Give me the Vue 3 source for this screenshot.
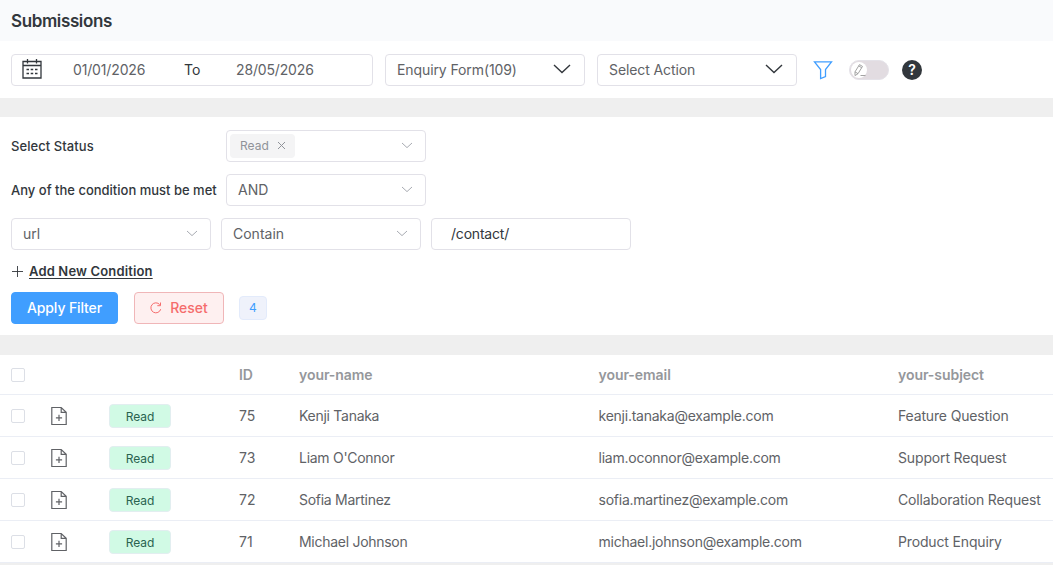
<template>
  <div class="page">
    <header class="page-header">
      <h1>Submissions</h1>
    </header>

    <!-- Toolbar: date range, form picker, bulk action -->
    <div class="toolbar">
      <div class="date-range">
        <svg class="calendar-icon" width="22" height="22" viewBox="0 0 22 22">
          <path d="M2 3.500h18v16.500H2zM2 7.500h18M6.500 1v4.500M15.500 1v4.500" />
          <path class="dots" d="M5.500 11.500h2.500M9.700 11.500h2.500M14 11.500h2.500M5.500 15.500h2.500M9.700 15.500h2.500M14 15.500h2.500" />
        </svg>
        <span class="date from">{{ dateRange.from }}</span>
        <span class="to">To</span>
        <span class="date">{{ dateRange.to }}</span>
      </div>

      <div class="select dark">
        <span>Enquiry Form(109)</span>
        <svg width="18" height="10" viewBox="0 0 18 10"><path d="M1 1l8 7.500L17 1" /></svg>
      </div>
      <div class="select dark">
        <span>Select Action</span>
        <svg width="18" height="10" viewBox="0 0 18 10"><path d="M1 1l8 7.500L17 1" /></svg>
      </div>

      <svg class="filter-icon" width="20" height="20" viewBox="0 0 20 20">
        <path d="M1.500 1.800h17L12.500 9.500v7L7.600 18.500v-9z" />
      </svg>

      <button type="button" class="switch">
        <span class="knob">
          <svg width="14" height="14" viewBox="0 0 14 14">
            <path d="M3 8.800L7.500 1.600l3 1.800L6 10.700l-3 1.900zM6.700 2.900l3 1.800M3 8.800l3 1.900M8.500 12.500h5" />
          </svg>
        </span>
      </button>

      <span class="help">?</span>
    </div>

    <!-- Filter conditions -->
    <section class="filters">
      <div class="filter-row">
        <label class="status-label">Select Status</label>
        <div class="select tags">
          <span class="tag">
            Read
            <svg width="9" height="9" viewBox="0 0 9 9"><path d="M1 1l7 7M8 1L1 8" /></svg>
          </span>
          <svg width="12" height="7" viewBox="0 0 12 7"><path d="M1 1l5 4.600L11 1" /></svg>
        </div>
      </div>

      <div class="filter-row">
        <label>Any of the condition must be met</label>
        <div class="select">
          <span>AND</span>
          <svg width="12" height="7" viewBox="0 0 12 7"><path d="M1 1l5 4.600L11 1" /></svg>
        </div>
      </div>

      <div class="condition">
        <div class="select">
          <span>url</span>
          <svg width="12" height="7" viewBox="0 0 12 7"><path d="M1 1l5 4.600L11 1" /></svg>
        </div>
        <div class="select">
          <span>Contain</span>
          <svg width="12" height="7" viewBox="0 0 12 7"><path d="M1 1l5 4.600L11 1" /></svg>
        </div>
        <input v-model="conditionValue" type="text" class="value-input" />
      </div>

      <a class="add-condition">
        <svg width="13" height="13" viewBox="0 0 13 13"><path d="M6.500 1v11M1 6.500h11" /></svg>
        <span>Add New Condition</span>
      </a>

      <div class="filter-actions">
        <button type="button" class="btn primary">Apply Filter</button>
        <button type="button" class="btn danger">
          <svg width="12" height="12" viewBox="0 0 12 12">
            <path d="M10.700 7.200A5 5 0 1 1 9.700 2.600M10.500 .500v3.200H7.300" />
          </svg>
          <span>Reset</span>
        </button>
        <span class="count">4</span>
      </div>
    </section>

    <!-- Submissions table -->
    <div class="table">
      <div class="row head">
        <span><i class="checkbox"></i></span>
        <span></span>
        <span></span>
        <span>ID</span>
        <span>your-name</span>
        <span>your-email</span>
        <span>your-subject</span>
      </div>
      <div v-for="item in submissions" :key="item.id" class="row">
        <span><i class="checkbox"></i></span>
        <span>
          <svg class="doc-icon" width="18" height="20" viewBox="0 0 18 20">
            <path d="M1.800 1.500h9.400L16.200 6.300v12.200H1.800zM11.200 1.500v4.800h5M9 8.700v6.200M5.900 11.800h6.200" />
          </svg>
        </span>
        <span><b class="status">{{ item.status }}</b></span>
        <span>{{ item.id }}</span>
        <span class="name">{{ item.name }}</span>
        <span class="email">{{ item.email }}</span>
        <span class="subject">{{ item.subject }}</span>
      </div>
    </div>
  </div>
</template>

<script setup>
import { ref } from 'vue'

const dateRange = ref({ from: '01/01/2026', to: '28/05/2026' })
const conditionValue = ref('/contact/')

const submissions = ref([
  { id: 75, status: 'Read', name: 'Kenji Tanaka', email: 'kenji.tanaka@example.com', subject: 'Feature Question' },
  { id: 73, status: 'Read', name: "Liam O'Connor", email: 'liam.oconnor@example.com', subject: 'Support Request' },
  { id: 72, status: 'Read', name: 'Sofia Martinez', email: 'sofia.martinez@example.com', subject: 'Collaboration Request' },
  { id: 71, status: 'Read', name: 'Michael Johnson', email: 'michael.johnson@example.com', subject: 'Product Enquiry' }
])
</script>

<style>
body {
  background: #efefef;
}
</style>

<style scoped>
.page {
  width: 100%;
  height: 565px;
  overflow: hidden;
  background: #efefef;
  color: #606266;
  font-family: Inter, "Liberation Sans", sans-serif;
  font-size: 14px;
}

.page * {
  box-sizing: border-box;
}

svg {
  display: block;
  flex: none;
  fill: none;
  stroke: currentColor;
}

.page-header {
  display: flex;
  align-items: center;
  height: 41px;
  padding: 0 11px;
  background: #f9fafc;
}

h1 {
  margin: 0;
  color: #32373c;
  font-size: 17px;
  font-weight: 600;
  letter-spacing: -0.38px;
}

.toolbar {
  display: flex;
  align-items: center;
  height: 57px;
  padding: 0 11px;
  background: #fff;
}

.date-range {
  display: flex;
  align-items: center;
  width: 362px;
  height: 32px;
  margin-right: 12px;
  padding: 0 0 1px 9px;
  border: 1px solid #e2e1e8;
  border-radius: 4px;
}

.calendar-icon {
  color: #32373c;
  stroke-width: 1.3;
}

.calendar-icon .dots {
  stroke-width: 1.4;
}

.date {
  width: 90px;
  letter-spacing: -0.15px;
}

.date.from {
  width: 111px;
  margin-left: 30px;
}

.to {
  width: 52px;
  color: #32373c;
}

.select {
  display: flex;
  align-items: center;
  justify-content: space-between;
  width: 200px;
  height: 32px;
  padding: 0 12px 1px 11px;
  border: 1px solid #e2e1e8;
  border-radius: 4px;
  background: #fff;
}

.select svg {
  color: #a8abb2;
}

.select.dark {
  margin-right: 12px;
  padding-right: 13px;
  letter-spacing: -0.1px;
}

.select.dark svg {
  color: #32373c;
  stroke-width: 1.4;
}

.filter-icon {
  margin-left: 4px;
  color: #409eff;
  stroke-width: 1.3;
}

.switch {
  display: flex;
  align-items: center;
  width: 40px;
  height: 20px;
  margin-left: 16px;
  padding: 0 1px;
  border: 1px solid #e4e2e8;
  border-radius: 10px;
  background: #e2dce1;
}

.knob {
  display: flex;
  align-items: center;
  justify-content: center;
  width: 16px;
  height: 16px;
  border-radius: 50%;
  background: #fff;
  color: #999;
}

.knob svg {
  stroke-width: 0.9;
}

.help {
  width: 20px;
  height: 20px;
  margin-left: 13px;
  border-radius: 50%;
  background: #32373c;
  color: #fff;
  font-size: 14px;
  font-weight: 600;
  line-height: 20px;
  text-align: center;
}

.filters {
  display: flex;
  flex-direction: column;
  height: 218px;
  margin-top: 19px;
  padding: 13px 11px 0;
  background: #fff;
}

.filter-row {
  display: flex;
  align-items: center;
  margin-bottom: 12px;
}

label {
  width: 215px;
  color: #32373c;
  font-size: 13px;
  font-weight: 500;
  white-space: nowrap;
}

.status-label {
  letter-spacing: 0.07px;
}

.select.tags {
  padding-left: 3px;
}

.tag {
  display: flex;
  align-items: center;
  gap: 8px;
  height: 24px;
  padding: 0 9px 0 10px;
  border-radius: 4px;
  background: #f4f4f5;
  color: #909399;
  font-size: 12px;
}

.tag svg {
  color: #909399;
}

.condition {
  display: flex;
  gap: 10px;
}

.value-input {
  width: 200px;
  height: 32px;
  padding: 0 19px 1px;
  border: 1px solid #e2e1e8;
  border-radius: 4px;
  outline: none;
  color: #32373c;
  font: inherit;
  letter-spacing: -0.2px;
}

.add-condition {
  display: flex;
  align-items: center;
  gap: 5px;
  height: 20px;
  margin-top: 11px;
  color: #32373c;
  font-size: 13px;
  font-weight: 600;
  letter-spacing: 0.15px;
}

.add-condition svg {
  stroke-width: 0.9;
}

.add-condition span {
  text-decoration: underline;
  text-decoration-thickness: 1px;
  text-underline-offset: 2px;
}

.filter-actions {
  display: flex;
  align-items: center;
  margin-top: 11px;
}

.btn {
  display: flex;
  align-items: center;
  justify-content: center;
  height: 32px;
  padding: 0 0 1px;
  border: 1px solid #409eff;
  border-radius: 4px;
  font-family: inherit;
  font-size: 14px;
  font-weight: 500;
}

.btn.primary {
  width: 107px;
  background: #409eff;
  color: #fff;
  letter-spacing: -0.12px;
}

.btn.danger {
  gap: 8px;
  width: 90px;
  margin-left: 16px;
  border-color: #f0b6b8;
  background: #fef0f0;
  color: #f56c6c;
}

.count {
  width: 28px;
  height: 24px;
  margin-left: 15px;
  border: 1px solid #e3ebfb;
  border-radius: 4px;
  background: #eff2fb;
  color: #409eff;
  font-size: 12px;
  line-height: 22px;
  text-align: center;
}

.table {
  margin-top: 20px;
  background: #fff;
}

.row {
  display: grid;
  grid-template-columns: 39px 59px 130px 60px 299.500px 299.500px 1fr;
  align-items: center;
  height: 42px;
  padding-left: 11px;
  border-bottom: 1px solid #ebeef5;
  white-space: nowrap;
}

.row.head {
  height: 40px;
  color: #95979b;
  font-weight: 600;
  letter-spacing: -0.06px;
}

.name {
  letter-spacing: -0.28px;
}

.email {
  letter-spacing: -0.24px;
}

.subject {
  letter-spacing: -0.15px;
}

.checkbox {
  display: block;
  width: 14px;
  height: 14px;
  border: 1px solid #dcdfe6;
  border-radius: 2px;
}

.doc-icon {
  stroke-width: 1.2;
}

.status {
  display: block;
  width: 62px;
  height: 24px;
  border: 1px solid #e2eef0;
  border-radius: 4px;
  background: #d1fae5;
  color: #2a6350;
  font-size: 12px;
  font-weight: 400;
  line-height: 23px;
  text-align: center;
}
</style>
